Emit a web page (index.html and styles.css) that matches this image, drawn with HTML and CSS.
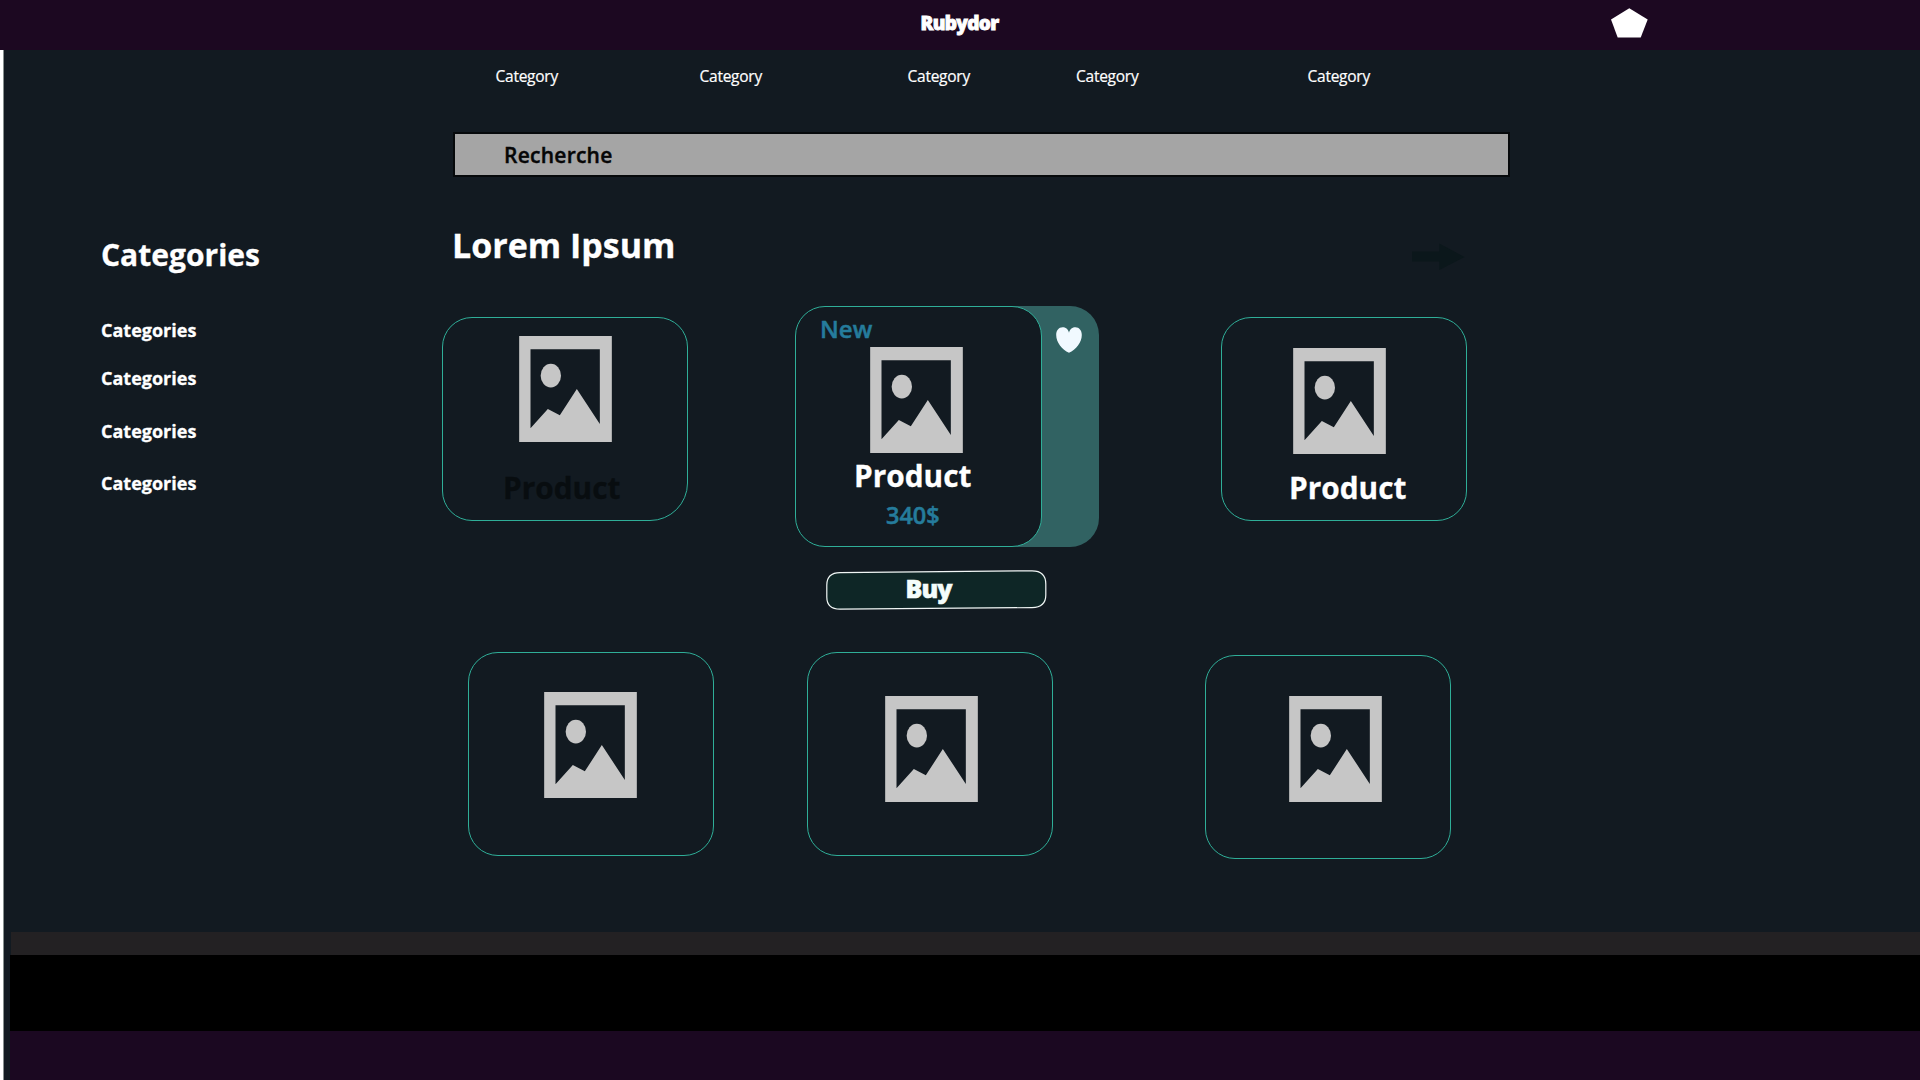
FILE: index.html
```html
<!DOCTYPE html>
<html lang="fr">
<head>
<meta charset="utf-8">
<title>Rubydor</title>
<link rel="stylesheet" href="styles.css">
</head>
<body>
<svg class="defs" width="0" height="0" aria-hidden="true">
  <symbol id="picture" viewBox="0 0 278 318">
    <path fill-rule="evenodd" d="M0 0H278V318H0ZM34 40V277L86 219L122 238L173 159L242 264V40Z"/>
    <ellipse cx="95" cy="119" rx="30.5" ry="35.5"/>
  </symbol>
</svg>
<header class="topbar">
  <span class="brand">Rubydor</span>
  <svg class="pentagon" width="37" height="30" viewBox="0 0 37 30"><path d="M18.3 0.3L36.7 11.5L29.7 29.5H6.7L0 11.5Z"/></svg>
</header>
<div class="page">
  <nav class="nav">
    <a>Category</a><a>Category</a><a>Category</a><a>Category</a><a>Category</a>
  </nav>
  <div class="main">
    <aside class="sidebar">
      <h2>Categories</h2>
      <ul>
        <li>Categories</li>
        <li>Categories</li>
        <li>Categories</li>
        <li>Categories</li>
      </ul>
    </aside>
    <main class="content">
      <div class="search">Recherche</div>
      <div class="title-row">
        <h1>Lorem Ipsum</h1>
        <svg class="arrow" width="53" height="28" viewBox="0 0 53 28"><path d="M0 8.5H27.3V0.5L52.5 14L27.3 27V18.5H0Z"/></svg>
      </div>
      <div class="row row-first">
        <article class="card card-a">
          <svg class="picture"><use href="#picture"/></svg>
          <h3 class="muted">Product</h3>
        </article>
        <div class="featured">
          <article class="card card-b">
            <span class="badge">New</span>
            <svg class="picture"><use href="#picture"/></svg>
            <h3>Product</h3>
            <span class="price">340$</span>
          </article>
          <svg class="heart" width="26" height="26" viewBox="0 0 26 26"><path d="M13 5.8C12 1.8 9.5 0.3 6.6 0.3C2.8 0.3 0.2 3.4 0.2 8C0.2 15.5 6 22.5 13 25.8C20 22.5 25.8 15.5 25.8 8C25.8 3.4 23.2 0.3 19.4 0.3C16.5 0.3 14 1.8 13 5.8Z"/></svg>
        </div>
        <article class="card card-c">
          <svg class="picture"><use href="#picture"/></svg>
          <h3>Product</h3>
        </article>
      </div>
      <div class="buy">
        <svg class="buy-shape" width="222" height="40" viewBox="0 0 222 40"><path d="M14 2.6L206 0.8Q219.8 0.8 219.8 14V25Q219.8 37.3 206 37.6L14 39.2Q0.8 39.2 0.8 27V15Q0.8 2.7 14 2.6Z"/></svg>
        <span>Buy</span>
      </div>
      <div class="row row-second">
        <article class="card card-d"><svg class="picture"><use href="#picture"/></svg></article>
        <article class="card card-e"><svg class="picture"><use href="#picture"/></svg></article>
        <article class="card card-f"><svg class="picture"><use href="#picture"/></svg></article>
      </div>
    </main>
  </div>
  <footer class="footer">
    <div class="strip-grey"></div>
    <div class="strip-black"></div>
    <div class="strip-purple"></div>
  </footer>
</div>
</body>
</html>
```
FILE: styles.css
```css
* { box-sizing: border-box; }
body {
  margin: 0;
  height: 1080px;
  overflow: hidden;
  display: flex;
  flex-direction: column;
  background: #fff;
  color: #fff;
  font-family: "Open Sans", "Noto Sans", sans-serif;
}
h1, h2, h3, ul { margin: 0; padding: 0; font-weight: 700; }
ul { list-style: none; }
svg { display: block; flex: none; }
.defs { position: absolute; }

.topbar {
  height: 50px;
  display: flex;
  align-items: flex-start;
  padding-left: 920.5px;
  background: #1c0821;
}
.brand {
  width: 690.5px;
  padding-top: 10px;
  font-size: 19px;
  line-height: 26px;
  font-weight: 800;
  letter-spacing: -0.65px;
  -webkit-text-stroke: 0.9px #fff;
}
.pentagon { margin-top: 8px; fill: #fff; }

.page {
  flex: 1;
  display: flex;
  flex-direction: column;
  margin-left: 3px;
  border-left: 1px solid #87908f;
  background: #121a21;
}
.nav {
  height: 82px;
  display: grid;
  grid-template-columns: 204px 208px 168.5px 231.5px auto;
  padding: 15px 0 0 491.5px;
  font-size: 15.5px;
  line-height: 23px;
  letter-spacing: -0.25px;
  -webkit-text-stroke: 0.2px #fff;
}
.main { display: grid; grid-template-columns: 438px 1fr; }

.sidebar { padding: 103px 0 0 97px; }
.sidebar h2 { font-size: 30px; line-height: 40px; -webkit-text-stroke: 0.3px #fff; }
.sidebar ul { padding-top: 43px; font-size: 18px; line-height: 24px; font-weight: 700; -webkit-text-stroke: 0.3px #fff; }
.sidebar li:nth-child(2) { margin-top: 24px; }
.sidebar li:nth-child(3) { margin-top: 29px; }
.sidebar li:nth-child(4) { margin-top: 28px; }

.search {
  width: 1057px;
  height: 45px;
  margin-left: 10.5px;
  padding-left: 49.5px;
  border: 2px solid #06090b;
  background: #a5a5a5;
  color: #060606;
  font-size: 21px;
  line-height: 42px;
  font-weight: 600;
  letter-spacing: 0.25px;
  -webkit-text-stroke: 0.4px #060606;
}
.title-row { display: flex; height: 129px; padding: 45px 0 0 10px; }
.title-row h1 { width: 959.5px; font-size: 34px; line-height: 46px; -webkit-text-stroke: 0.3px #fff; }
.arrow { margin-top: 21px; fill: #0b171b; }

.row { display: flex; align-items: flex-start; }
.card {
  width: 246px;
  height: 204px;
  border: 1px solid #2fae98;
  border-radius: 30px;
}
.picture { width: 93px; height: 106px; fill: #c6c6c6; }
.card h3 { font-size: 29.8px; line-height: 40px; -webkit-text-stroke: 0.3px; }
.card .muted { color: #080d10; }

.row-first { height: 241px; }
.card-a { margin-top: 11px; padding: 18px 0 0 76px; border-bottom-right-radius: 38px; }
.card-a h3 { margin: 26px 0 0 -16px; }
.featured {
  width: 304px;
  height: 241px;
  margin-left: 107px;
  display: flex;
  border-radius: 29px;
  background: linear-gradient(90deg, transparent 200px, #316262 200px);
}
.card-b {
  height: 241px;
  width: 247px;
  display: flex;
  flex-direction: column;
  align-items: flex-start;
  padding-left: 74px;
  background: #121a21;
}
.badge {
  margin: 5px 0 0 -50px;
  font-size: 24px;
  line-height: 34px;
  font-weight: 600;
  color: #257c9c;
  -webkit-text-stroke: 0.5px;
}
.card-b .picture { margin-top: 1px; }
.card-b h3 { margin: 3px 0 0 -16px; }
.price {
  margin: 3px 0 0 16px;
  font-size: 23.5px;
  line-height: 32px;
  font-weight: 600;
  color: #257c9c;
  -webkit-text-stroke: 0.5px;
}
.heart { margin: 21px 0 0 14px; fill: #f1f9ff; }
.card-c { margin: 11px 0 0 122px; padding: 30px 0 0 71px; }
.card-c h3 { margin: 14px 0 0 -4px; }

.buy {
  display: grid;
  width: 222px;
  height: 40px;
  margin: 23px 0 42px 384px;
}
.buy-shape, .buy span { grid-area: 1 / 1; }
.buy-shape { fill: #0e2626; stroke: #f0f6f5; stroke-width: 1.2; }
.buy span {
  padding-left: 79.5px;
  font-size: 25px;
  line-height: 37px;
  font-weight: 800;
  letter-spacing: -0.9px;
  color: #f4fdfb;
  -webkit-text-stroke: 0.6px #f4fdfb;
}

.card-d { margin-left: 26px; padding: 39px 0 0 75px; }
.card-e { margin-left: 93px; padding: 43px 0 0 77px; }
.card-f { margin: 3px 0 0 152px; padding: 40px 0 0 83px; }

.footer { margin: auto 0 0 6px; }
.strip-grey { height: 23px; margin-left: 1px; background: #232123; }
.strip-black { height: 76px; background: #000; }
.strip-purple { height: 49px; background: #1b0821; }
```
